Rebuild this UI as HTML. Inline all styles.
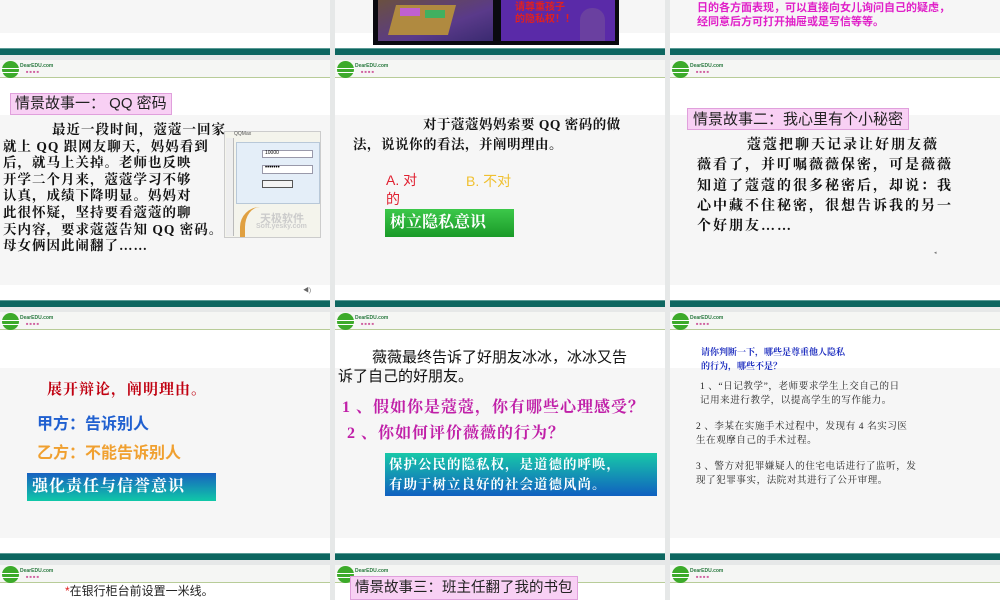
<!DOCTYPE html>
<html><head><meta charset="utf-8"><style>
*{margin:0;padding:0;box-sizing:border-box}
body{width:1000px;height:600px;overflow:hidden;background:#e6e8e8;position:relative;font-family:"Liberation Sans","Noto Sans CJK SC",sans-serif}
.a{position:absolute}
.col{position:absolute;width:330px;background:#fff}
.g{position:absolute;background:#f6f6f6}
.bar{position:absolute;height:7px;background:#0d6660;border-top:1px solid #5a9a95}
.hd{position:absolute;height:18px;background:#f5f6f4;border-bottom:1px solid #b8cc98}
.logo{position:absolute;left:2px;top:1px;width:17px;height:17px;border-radius:50%;background:#3caa2a}
.logo:after{content:"";position:absolute;left:-1px;top:7px;width:19px;height:3px;border-top:1px solid #fff;border-bottom:1px solid #fff}
.lt{position:absolute;left:20px;top:3px;font-size:5px;color:#2a7a40;font-weight:bold;white-space:nowrap}
.lt2{position:absolute;left:26px;top:9px;font-size:4px;color:#d060a0;white-space:nowrap}
.kai{font-family:"Liberation Serif","Noto Serif CJK SC",serif;font-weight:bold}
.pink{background:#f8d0f4;border:1px solid #e0a0dc;color:#222;white-space:nowrap}
.t{white-space:nowrap}
</style></head><body>

<div class="col" style="left:0;top:0;height:600px"></div>
<div class="col" style="left:335px;top:0;height:600px"></div>
<div class="col" style="left:670px;top:0;height:600px"></div>

<div class="g" style="left:0;top:0;width:330px;height:33px"></div>
<div class="g" style="left:335px;top:0;width:330px;height:33px"></div>
<div class="g" style="left:670px;top:0;width:330px;height:33px"></div>

<div class="a" style="left:0;top:55px;width:1000px;height:5px;background:#e6e8e8"></div>
<div class="a" style="left:0;top:307px;width:1000px;height:5px;background:#e6e8e8"></div>
<div class="a" style="left:0;top:560px;width:1000px;height:5px;background:#e6e8e8"></div>

<div class="bar" style="left:0;top:48px;width:330px"></div>
<div class="bar" style="left:335px;top:48px;width:330px"></div>
<div class="bar" style="left:670px;top:48px;width:330px"></div>
<div class="bar" style="left:0;top:300px;width:330px"></div>
<div class="bar" style="left:335px;top:300px;width:330px"></div>
<div class="bar" style="left:670px;top:300px;width:330px"></div>
<div class="bar" style="left:0;top:553px;width:330px"></div>
<div class="bar" style="left:335px;top:553px;width:330px"></div>
<div class="bar" style="left:670px;top:553px;width:330px"></div>

<div class="hd" style="left:0;top:60px;width:330px"><div class="logo"></div><div class="lt">DearEDU.com</div><div class="lt2">■ ■ ■ ■</div></div>
<div class="hd" style="left:335px;top:60px;width:330px"><div class="logo"></div><div class="lt">DearEDU.com</div><div class="lt2">■ ■ ■ ■</div></div>
<div class="hd" style="left:670px;top:60px;width:330px"><div class="logo"></div><div class="lt">DearEDU.com</div><div class="lt2">■ ■ ■ ■</div></div>
<div class="hd" style="left:0;top:312px;width:330px"><div class="logo"></div><div class="lt">DearEDU.com</div><div class="lt2">■ ■ ■ ■</div></div>
<div class="hd" style="left:335px;top:312px;width:330px"><div class="logo"></div><div class="lt">DearEDU.com</div><div class="lt2">■ ■ ■ ■</div></div>
<div class="hd" style="left:670px;top:312px;width:330px"><div class="logo"></div><div class="lt">DearEDU.com</div><div class="lt2">■ ■ ■ ■</div></div>
<div class="hd" style="left:0;top:565px;width:330px"><div class="logo"></div><div class="lt">DearEDU.com</div><div class="lt2">■ ■ ■ ■</div></div>
<div class="hd" style="left:335px;top:565px;width:330px"><div class="logo"></div><div class="lt">DearEDU.com</div><div class="lt2">■ ■ ■ ■</div></div>
<div class="hd" style="left:670px;top:565px;width:330px"><div class="logo"></div><div class="lt">DearEDU.com</div><div class="lt2">■ ■ ■ ■</div></div>

<div class="g" style="left:0;top:115px;width:330px;height:170px"></div>
<div class="g" style="left:335px;top:115px;width:330px;height:170px"></div>
<div class="g" style="left:670px;top:115px;width:330px;height:170px"></div>
<div class="g" style="left:0;top:368px;width:330px;height:170px"></div>
<div class="g" style="left:335px;top:368px;width:330px;height:170px"></div>
<div class="g" style="left:670px;top:368px;width:330px;height:170px"></div>

<div class="a" style="left:373px;top:0;width:246px;height:45px;background:#0a0a10"></div>
<div class="a" style="left:378px;top:0;width:115px;height:41px;background:linear-gradient(160deg,#6a5040,#5a3a8a 60%,#3a2a70)"></div>
<div class="a" style="left:392px;top:5px;width:60px;height:30px;background:#b08a40;transform:skewX(-15deg)"></div>
<div class="a" style="left:400px;top:8px;width:20px;height:8px;background:#c060d0"></div>
<div class="a" style="left:425px;top:10px;width:20px;height:8px;background:#40b060"></div>
<div class="a" style="left:501px;top:0;width:114px;height:41px;background:#5a2aa8"></div>
<div class="a t" style="left:515px;top:2px;font-size:10px;color:#e02020;font-weight:bold;line-height:12px">请尊重孩子<br>的隐私权！！</div>
<div class="a" style="left:580px;top:8px;width:25px;height:33px;background:#6a40a0;border-radius:12px 12px 0 0"></div>

<div class="a t" style="left:697px;top:1px;font-size:11px;color:#e020c8;font-weight:bold;line-height:14px">日的各方面表现，可以直接向女儿询问自己的疑虑，<br>经同意后方可打开抽屉或是写信等等。</div>

<!-- Slide 1 -->
<div class="a pink" style="left:10px;top:93px;height:22px;font-size:15px;line-height:20px;padding:0 4px">情景故事一： QQ 密码</div>
<div class="a t kai" style="left:3px;top:122px;font-size:13.5px;line-height:16.6px;letter-spacing:1px;color:#111">
<span style="padding-left:49px">最近一段时间，蔻蔻一回家</span><br>就上 QQ 跟网友聊天，妈妈看到<br>后，就马上关掉。老师也反映<br>开学二个月来，蔻蔻学习不够<br>认真，成绩下降明显。妈妈对<br>此很怀疑，坚持要看蔻蔻的聊<br>天内容，要求蔻蔻告知 QQ 密码。<br>母女俩因此闹翻了……</div>
<div class="a" style="left:224px;top:131px;width:97px;height:107px;background:#f4f4ec;border:1px solid #ccc"></div>
<div class="a t" style="left:234px;top:131px;font-size:5px;color:#555">QQMax</div>
<div class="a" style="left:226px;top:138px;width:8px;height:98px;background:#eee;border-right:1px solid #bbb"></div>
<div class="a" style="left:236px;top:142px;width:84px;height:62px;background:#e4eef8;border:1px solid #b8c8d8"></div>
<div class="a" style="left:262px;top:150px;width:51px;height:8px;background:#fff;border:1px solid #99a"></div>
<div class="a t" style="left:265px;top:150px;font-size:5px">10000</div>
<div class="a" style="left:262px;top:165px;width:51px;height:9px;background:#fff;border:1px solid #99a"></div>
<div class="a t" style="left:265px;top:165px;font-size:6px">•••••••</div>
<div class="a" style="left:262px;top:180px;width:31px;height:8px;background:#f4f4f4;border:1px solid #555"></div>
<div class="a" style="left:240px;top:207px;width:20px;height:30px;border-left:5px solid #e0a040;border-radius:20px 0 0 0"></div>
<div class="a t" style="left:260px;top:210px;font-size:11px;color:#ccc;font-weight:bold">天极软件</div>
<div class="a t" style="left:256px;top:223px;font-size:7px;color:#ccc;font-weight:bold">Soft.yesky.com</div>
<div class="a t" style="left:303px;top:285px;font-size:6px;color:#666">◀)</div>

<!-- Slide 2 -->
<div class="a t kai" style="left:353px;top:115px;font-size:13.5px;line-height:20px;letter-spacing:0.5px;color:#111"><span style="padding-left:70px">对于蔻蔻妈妈索要 QQ 密码的做</span><br>法，说说你的看法，并阐明理由。</div>
<div class="a t" style="left:386px;top:171px;font-size:14px;line-height:19px;color:#e02030">A. 对<br>的</div>
<div class="a t" style="left:466px;top:171px;font-size:14px;color:#f0c030">B. 不对</div>
<div class="a t kai" style="left:385px;top:209px;width:129px;height:28px;background:linear-gradient(#3cc84a,#1a9a28);color:#fff;font-size:16px;line-height:27px;padding-left:5px">树立隐私意识</div>

<!-- Slide 3 -->
<div class="a pink" style="left:687px;top:108px;height:22px;font-size:15px;line-height:21px;padding:0 5px">情景故事二：我心里有个小秘密</div>
<div class="a t kai" style="left:697px;top:136px;font-size:14px;line-height:20.3px;letter-spacing:2px;color:#111"><span style="padding-left:50px">蔻蔻把聊天记录让好朋友薇</span><br>薇看了，并叮嘱薇薇保密，可是薇薇<br>知道了蔻蔻的很多秘密后，却说：我<br>心中藏不住秘密，很想告诉我的另一<br>个好朋友……</div>
<div class="a t" style="left:934px;top:250px;font-size:5px;color:#777">◂</div>

<!-- Slide 4 -->
<div class="a t kai" style="left:47px;top:378px;font-size:15px;letter-spacing:1px;color:#c00010">展开辩论，阐明理由。</div>
<div class="a t" style="left:37px;top:410px;font-size:16px;color:#2060d0;font-weight:bold">甲方：告诉别人</div>
<div class="a t" style="left:37px;top:439px;font-size:16px;color:#f0a030;font-weight:bold">乙方：不能告诉别人</div>
<div class="a t kai" style="left:27px;top:473px;width:189px;height:28px;background:linear-gradient(#1860c0,#10c8a8);color:#fff;font-size:16px;line-height:27px;letter-spacing:1px;padding-left:5px">强化责任与信誉意识</div>

<!-- Slide 5 -->
<div class="a t" style="left:338px;top:348px;font-size:15px;line-height:19px;color:#111"><span style="padding-left:34px">薇薇最终告诉了好朋友冰冰，冰冰又告</span><br>诉了自己的好朋友。</div>
<div class="a t kai" style="left:342px;top:395px;font-size:16px;line-height:26px;letter-spacing:1px;color:#c020a8">1 、假如你是蔻蔻，你有哪些心理感受？<br>&nbsp;2 、你如何评价薇薇的行为？</div>
<div class="a t kai" style="left:385px;top:453px;width:272px;height:43px;background:linear-gradient(#18c8a8,#1060c0);color:#fff;font-size:13.5px;line-height:20px;letter-spacing:1px;padding:2px 0 0 4px">保护公民的隐私权，是道德的呼唤，<br>有助于树立良好的社会道德风尚。</div>

<!-- Slide 6 -->
<div class="a t kai" style="left:701px;top:345px;font-size:9px;line-height:14px;color:#2030c0">请你判断一下，哪些是尊重他人隐私<br>的行为，哪些不是？</div>
<div class="a t" style="left:697px;top:380px;font-size:9.5px;line-height:14px;letter-spacing:0.6px;color:#222;font-family:'Liberation Serif','Noto Serif CJK SC',serif">&nbsp;1 、“日记教学”，老师要求学生上交自己的日<br>&nbsp;记用来进行教学，以提高学生的写作能力。</div>
<div class="a t" style="left:696px;top:420px;font-size:9.5px;line-height:14px;letter-spacing:0.6px;color:#222;font-family:'Liberation Serif','Noto Serif CJK SC',serif">2 、李某在实施手术过程中，发现有 4 名实习医<br>生在观摩自己的手术过程。</div>
<div class="a t" style="left:696px;top:460px;font-size:9.5px;line-height:14px;letter-spacing:0.6px;color:#222;font-family:'Liberation Serif','Noto Serif CJK SC',serif">3 、警方对犯罪嫌疑人的住宅电话进行了监听，发<br>现了犯罪事实，法院对其进行了公开审理。</div>

<div class="a t" style="left:65px;top:582px;font-size:12px;color:#222"><span style="color:#e02020">*</span>在银行柜台前设置一米线。</div>
<div class="a pink" style="left:350px;top:576px;height:24px;font-size:14.5px;line-height:22px;padding:0 4px">情景故事三：班主任翻了我的书包</div>

</body></html>
